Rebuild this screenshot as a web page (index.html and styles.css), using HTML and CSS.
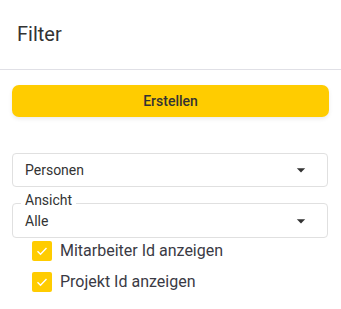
FILE: index.html
```html
<!DOCTYPE html>
<html lang="de">

<head>

    <meta charset="UTF-8">
    <meta name="viewport" content="width=device-width, initial-scale=1.0">
    <title>Filter</title>

    <link rel="stylesheet" href="styles.css">

</head>

<body>

    <div class="header">
        <h1>Filter</h1>
    </div>

    <div class="content">

        <button class="btn-erstellen">Erstellen</button>

        <div class="select select-personen">
            <span class="select-value">Personen</span>
            <svg class="arrow" viewBox="0 0 24 24" width="20" height="20"><path d="M7 10l5 5 5-5z"/></svg>
        </div>

        <fieldset class="select-field">
            <legend>Ansicht</legend>
            <div class="select-inner">
                <span class="select-value">Alle</span>
                <svg class="arrow" viewBox="0 0 24 24" width="20" height="20"><path d="M7 10l5 5 5-5z"/></svg>
            </div>
        </fieldset>

        <div class="checks">

            <label class="check">
                <span class="check-box">
                    <svg viewBox="0 0 20 20" width="20" height="20"><path d="M5.5 10.2l3 3 6-6.2" fill="none" stroke="#fff" stroke-width="1.4"/></svg>
                </span>
                Mitarbeiter Id anzeigen
            </label>

            <label class="check">
                <span class="check-box">
                    <svg viewBox="0 0 20 20" width="20" height="20"><path d="M5.5 10.2l3 3 6-6.2" fill="none" stroke="#fff" stroke-width="1.4"/></svg>
                </span>
                Projekt Id anzeigen
            </label>

        </div>

    </div>

</body>

</html>
```

FILE: styles.css
```css
body {
    margin: 0;
    font-family: Roboto, "Liberation Sans", sans-serif;
    background-color: #fff;
    color: #333;
}

.header {
    height: 70px;
    border-bottom: 1px solid #e0e0e6;
    box-sizing: border-box;
    padding: 22px 17px 0;
}

h1 {
    margin: 0;
    font-size: 20px;
    font-weight: 400;
    line-height: 24px;
    color: #333;
}

.content {
    padding: 15px 12px 0;
}

.btn-erstellen {
    display: block;
    width: 317px;
    height: 32px;
    border: none;
    border-radius: 7px;
    background-color: #ffcc00;
    color: #333;
    font-family: Roboto, "Liberation Sans", sans-serif;
    font-size: 14px;
    font-weight: 500;
    box-shadow: 0 2px 4px rgba(0, 0, 0, 0.08);
    cursor: pointer;
}

.select {
    display: flex;
    align-items: center;
    justify-content: space-between;
    width: 316px;
    height: 34px;
    box-sizing: border-box;
    border: 1px solid #e0e0e0;
    border-radius: 4px;
    padding: 0 16px 0 12px;
    margin-top: 36px;
    font-size: 14px;
}

.arrow {
    fill: #333;
}

.select-field {
    width: 316px;
    box-sizing: border-box;
    margin: 5px 0 0;
    padding: 0 16px 0 12px;
    min-inline-size: 0;
    border: 1px solid #e0e0e0;
    border-radius: 4px;
    font-size: 14px;
}

.select-field legend {
    padding: 0 4px 6px;
    margin-left: -4px;
    font-size: 14px;
    line-height: 16px;
    color: #333;
}

.select-inner {
    display: flex;
    align-items: center;
    justify-content: space-between;
    height: 22px;
    margin-top: -4px;
    padding-bottom: 5px;
}

.checks {
    padding: 3px 0 0 20px;
    display: flex;
    flex-direction: column;
    gap: 11px;
}

.check {
    display: flex;
    align-items: center;
    gap: 8px;
    font-size: 16px;
    color: #3a3a44;
    line-height: 20px;
}

.check-box {
    width: 20px;
    height: 20px;
    border-radius: 2px;
    background-color: #ffcc00;
    display: flex;
}
```
